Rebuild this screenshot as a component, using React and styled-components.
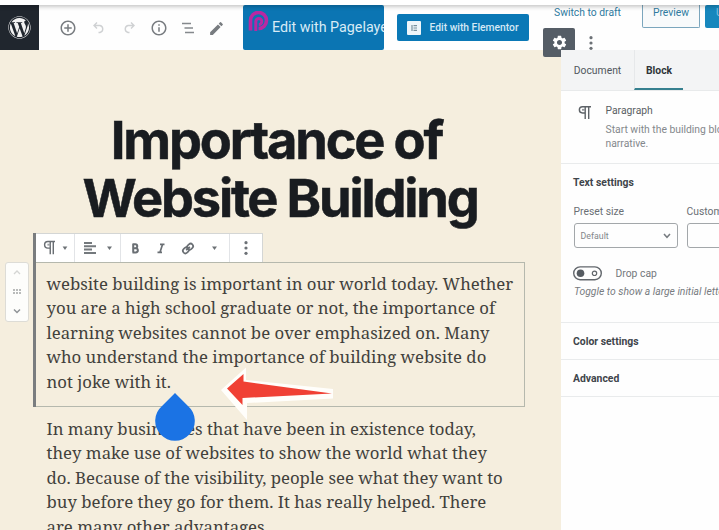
import React from "react";
import styled, { createGlobalStyle } from "styled-components";
import { FaWordpress } from "react-icons/fa";
import { MdAddCircleOutline, MdInfoOutline, MdEdit, MdSettings } from "react-icons/md";

const GlobalStyle = createGlobalStyle`
  * { box-sizing: border-box; }
  body { margin: 0; background: #fff; overflow: hidden; }
`;

const Page = styled.div`
  width: 719px;
  height: 530px;
  overflow: hidden;
  display: flex;
  flex-direction: column;
  background: #f5eede;
  font-family: Roboto, "Liberation Sans", sans-serif;
  font-size: 10.35px;
  color: #5b6167;
`;

const BrowserEdge = styled.div`
  height: 5px;
  flex: none;
  background: #fff;
  position: relative;
  z-index: 4;
  box-shadow: 0 1px 5px rgba(0, 0, 0, 0.3);
`;

const Header = styled.header`
  height: 45px;
  flex: none;
  display: flex;
  background: #fefefe;
  > * { flex: none; }
`;

const LogoBox = styled.div`
  width: 39px;
  display: flex;
  align-items: center;
  justify-content: center;
  background: #20262e;
  color: #f2f2f2;
  svg { display: block; }
`;

const Tools = styled.nav`
  width: 204px;
  padding: 1px 0 0 16px;
  display: flex;
  align-items: center;
`;

const ToolButton = styled.span`
  width: ${(p) => p.$w || 30}px;
  height: 24px;
  flex: none;
  display: flex;
  align-items: center;
  justify-content: center;
  color: ${(p) => (p.$muted ? "#cfd1d3" : "#787c80")};
  svg { display: block; }
`;

const PagelayerButton = styled.div`
  width: 141px;
  height: 45px;
  padding-left: 5px;
  display: flex;
  overflow: hidden;
  white-space: nowrap;
  border-radius: 2px;
  background: #0b75b3;
  color: #d8ebf6;
  font-size: 14.3px;
  line-height: 45px;
  gap: 3px;
  svg { flex: none; margin-top: 6px; }
`;

const ElementorButton = styled.div`
  width: 132px;
  height: 27px;
  margin: 9px 0 0 13px;
  padding-left: 10px;
  display: flex;
  align-items: center;
  gap: 8.5px;
  border-radius: 2px;
  background: #0a78b6;
  color: #d5e9f5;
  font-weight: 500;
  font-size: 10.3px;
`;

const HeaderEnd = styled.div`
  width: 176px;
  margin-left: 14px;
  display: flex;
  flex-direction: column;
`;

const Actions = styled.div`
  height: 24px;
  padding-left: 11px;
  display: flex;
  align-items: flex-start;
  color: #2f7ba0;
  > * { flex: none; }
`;

const DraftLink = styled.span`
  width: 88px;
  line-height: 15px;
`;

const PreviewButton = styled.span`
  width: 58px;
  height: 23px;
  border: 1px solid #7ba6bd;
  border-top: 0;
  border-radius: 0 0 2px 2px;
  background: #f8fafb;
  line-height: 15px;
  text-align: center;
`;

const UpdateButton = styled.span`
  width: 40px;
  height: 23px;
  margin-left: 5px;
  padding-left: 11px;
  border-radius: 2px;
  background: #1787bd;
  color: #86c4e2;
  line-height: 15px;
`;

const SettingsRow = styled.div`
  display: flex;
  align-items: flex-start;
  gap: 14px;
  svg { display: block; }
`;

const SettingsButton = styled.span`
  width: 32px;
  height: 29px;
  flex: none;
  position: relative;
  z-index: 1;
  display: flex;
  align-items: center;
  justify-content: center;
  background: #555d66;
  border-radius: 2px;
  color: #fff;
`;

const MoreButton = styled.span`
  padding-top: 7px;
`;

const Body = styled.div`
  flex: 1;
  min-height: 0;
  display: flex;
`;

const Canvas = styled.main`
  width: 561px;
  height: 480px;
  overflow: hidden;
`;

const Title = styled.h1`
  margin: 61px 0 0;
  font: 700 52.4px/58px Inter, sans-serif;
  letter-spacing: -2.2px;
  -webkit-text-stroke: 0.5px #191c20;
  text-align: center;
  color: #191c20;
`;

const TitleLine = styled.span`
  display: block;
  padding-right: ${(p) => p.$shift}px;
`;

const BlockArea = styled.div`
  margin-top: 6px;
  padding-left: 5px;
  display: flex;
  align-items: flex-start;
`;

const Mover = styled.div`
  width: 24px;
  height: 60px;
  margin: 29px 4px 0 0;
  flex: none;
  display: flex;
  align-items: center;
  justify-content: center;
  border: 1px solid #dddcd6;
  border-radius: 3px;
  background: #fdfdfb;
`;

const Block = styled.section`
  width: 492px;
  border-left: 3px solid #7a7d7f;
`;

const Toolbar = styled.div`
  width: 227px;
  height: 29px;
  display: flex;
  background: #fff;
  border: 1px solid #d4d6d5;
  border-width: 1px 1px 0 0;
`;

const Group = styled.div`
  width: ${(p) => p.$w}px;
  display: flex;
  align-items: center;
  justify-content: center;
  border-right: ${(p) => (p.$last ? "0" : "1px solid #e2e4e7")};
  svg { display: block; }
`;

const Paragraph = styled.p`
  margin: 0;
  font: 16.76px/24.45px "Noto Serif", "DejaVu Serif", serif;
  color: #42413c;
  white-space: nowrap;
`;

const Selected = styled.div`
  position: relative;
  height: 145px;
  padding: 9px 0 0 10.5px;
  border: 1px solid #b5b8ad;
  border-left: 0;
`;

const Following = styled.div`
  padding: 10px 0 0 46.5px;
`;

const Line = styled.span`
  display: block;
`;

const Arrow = styled.svg`
  position: absolute;
  left: 184px;
  top: 104px;
`;

const CaretHandle = styled.svg`
  position: absolute;
  left: 118px;
  top: 130px;
`;

const Sidebar = styled.aside`
  width: 158px;
  height: 480px;
  overflow: hidden;
  white-space: nowrap;
  position: relative;
  z-index: 2;
  background: #fefefe;
`;

const Tabs = styled.div`
  height: 41px;
  display: flex;
  background: #f3f4f5;
  border-bottom: 1px solid #e8eaeb;
`;

const Tab = styled.span`
  width: ${(p) => p.$w}px;
  line-height: 41px;
  text-align: center;
  color: ${(p) => (p.$active ? "#2f3439" : "#51575d")};
  font-weight: ${(p) => (p.$active ? 700 : 400)};
  border-bottom: ${(p) => (p.$active ? "2px solid #36808f" : "0")};
  border-left: ${(p) => (p.$active ? "1px solid #e6e8ea" : "0")};
`;

const BlockCard = styled.div`
  height: 73px;
  padding: 13px 0 0 17px;
  display: flex;
  gap: 14.5px;
  border-bottom: 1px solid #e9ebec;
  svg { flex: none; margin-top: 1px; }
`;

const CardText = styled.div`
  line-height: 14px;
  color: #84888c;
`;

const CardTitle = styled.div`
  margin-bottom: 5px;
  color: #5a5f64;
`;

const Panel = styled.div`
  height: ${(p) => p.$h}px;
  padding: 1px 0 0 12px;
  border-bottom: 1px solid #e9ebec;
`;

const PanelTitle = styled.h2`
  margin: 0;
  font-size: 10.4px;
  line-height: 36px;
  font-weight: 700;
  color: #3f454b;
`;

const Fields = styled.div`
  display: flex;
  gap: 8px;
  margin-top: 4px;
`;

const Field = styled.div`
  width: 105px;
  padding-left: 0.5px;
  flex: none;
  color: #6a6f74;
  line-height: 14px;
`;

const Control = styled.div`
  height: 25px;
  margin-top: 4px;
  padding: 0 6px;
  display: flex;
  align-items: center;
  justify-content: space-between;
  border: 1px solid #a3a7aa;
  border-radius: 3px;
  font-size: 8.8px;
  color: #83878b;
`;

const ToggleRow = styled.div`
  margin-top: 18px;
  display: flex;
  align-items: center;
  gap: 13.5px;
  color: #74787c;
`;

const Help = styled.div`
  margin: 4px 0 0 1px;
  line-height: 14px;
  font-style: italic;
  color: #777b7f;
`;

const PilcrowIcon = () => (
  <svg width="13" height="16" viewBox="0 0 13 16" fill="none" stroke="#5d6267" strokeWidth="1.4">
    <path d="M13 1.7H4.500a2.900 2.900 0 0 0 0 6.300h2.700M7.200 1.500v12.500M10.700 1.500v12.500" />
    <path d="M4 4.800h3" strokeWidth="1.800" stroke="#92969a" />
  </svg>
);

const UndoIcon = ({ flip }) => (
  <svg width="14" height="14" viewBox="0 0 14 14" fill="none" stroke="currentColor" strokeWidth="1.4">
    <path
      transform={flip ? "matrix(-1 0 0 1 14 0)" : undefined}
      d="M5 1.5L2 4.5l3 3M2.5 4.5H8a3.6 3.6 0 0 1 0 7H6.5"
    />
  </svg>
);

const OutlineIcon = () => (
  <svg width="14" height="12" viewBox="0 0 14 12" fill="none" stroke="#85898d" strokeWidth="1.6">
    <path d="M1 1.500h9M3.500 6h8.500M4 10.500h9" />
  </svg>
);

const PagelayerLogo = () => (
  <svg width="21" height="22" viewBox="0 0 21 22" fill="none" stroke="#b928a2">
    <path d="M2.500 19.500V9.500a8 8 0 1 1 8 8" strokeWidth="3.600" />
    <path d="M7.800 20v-9.500a3 3 0 1 1 3 3" strokeWidth="3" />
  </svg>
);

const ElementorLogo = () => (
  <svg width="14" height="14" viewBox="0 0 14 14">
    <rect width="14" height="14" rx="1" fill="#eef6fa" />
    <path d="M5 4v6M6.500 4.600H10M6.500 7H10M6.500 9.400H10" stroke="#77909c" strokeWidth="1.200" />
  </svg>
);

const DotsIcon = () => (
  <svg width="4" height="16" viewBox="0 0 4 16" fill="#6c7176">
    <circle cx="2" cy="2.700" r="1.600" />
    <circle cx="2" cy="8" r="1.600" />
    <circle cx="2" cy="13.300" r="1.600" />
  </svg>
);

const ParagraphTool = () => (
  <svg width="40" height="28" viewBox="0 0 40 28" fill="none" stroke="#696e73" strokeWidth="1.500">
    <path d="M20 7.200h-7.500a3.400 3.400 0 0 0 0 6.900h2.500M15 7v13.500M18.200 7v13.500" />
    <path d="M12 10.500h3" strokeWidth="2" stroke="#9da1a4" />
    <path d="M28 12.500h5l-2.500 3.500z" fill="#6d7276" stroke="none" />
  </svg>
);

const AlignTool = () => (
  <svg width="45" height="28" viewBox="0 0 45 28" fill="none" stroke="#74797d" strokeWidth="2">
    <path d="M9 9h8M9 12.300h12M9 15.600h8M9 18.900h12" />
    <path d="M32 12.500h5l-2.500 3.500z" fill="#6d7276" stroke="none" />
  </svg>
);

const FormatTool = () => (
  <svg width="108" height="28" viewBox="0 0 108 28" fill="none" stroke="#6a6f74" strokeWidth="2">
    <path d="M11.500 10.300h2.800a1.900 1.900 0 0 1 0 3.900h-2.300 2.700a2.100 2.100 0 0 1 0 4.300h-3.200M12.200 10v8.500" />
    <path d="M39 10.300h4.500M36.500 18.300H41M41.500 10.500l-2.500 7.700" strokeWidth="1.700" />
    <g strokeWidth="1.700" transform="rotate(-42 67 14.500)">
      <rect x="61" y="12" width="6.500" height="5" rx="2.500" />
      <rect x="66.500" y="12" width="6.500" height="5" rx="2.500" />
      <path d="M64.500 14.500h5" />
    </g>
    <path d="M91 12.500h5l-2.500 3.500z" fill="#6d7276" stroke="none" />
  </svg>
);

const MoverIcon = () => (
  <svg width="14" height="50" viewBox="0 0 14 50" fill="none">
    <path d="M4 7l3-3 3 3" stroke="#d4d5d3" strokeWidth="1.300" />
    <g fill="#b9bbba">
      {[3, 6, 9].map((x) =>
        [22, 25].map((y) => <rect key={`${x}-${y}`} x={x} y={y} width="2" height="2" />)
      )}
    </g>
    <path d="M4 42.500l3 3 3-3" stroke="#909497" strokeWidth="1.500" />
  </svg>
);

const SwitchIcon = () => (
  <svg width="29" height="15" viewBox="0 0 29 15" fill="none" stroke="#62676c">
    <rect x="0.700" y="0.900" width="27.600" height="12.800" rx="6.400" strokeWidth="1.400" />
    <circle cx="7.500" cy="7.300" r="3.800" fill="#565c62" stroke="none" />
    <circle cx="21.500" cy="7.300" r="2.200" strokeWidth="1.200" />
  </svg>
);

export default function App() {
  return (
    <Page>
      <GlobalStyle />
      <BrowserEdge />
      <Header>
        <LogoBox><FaWordpress size={23} /></LogoBox>
        <Tools>
          <ToolButton $w={25}><MdAddCircleOutline size={18} /></ToolButton>
          <ToolButton $w={37} $muted><UndoIcon /></ToolButton>
          <ToolButton $w={24} $muted><UndoIcon flip /></ToolButton>
          <ToolButton $w={35}><MdInfoOutline size={18} /></ToolButton>
          <ToolButton $w={23}><OutlineIcon /></ToolButton>
          <ToolButton $w={34}><MdEdit size={17} /></ToolButton>
        </Tools>
        <PagelayerButton><PagelayerLogo />Edit with Pagelayer</PagelayerButton>
        <ElementorButton><ElementorLogo />Edit with Elementor</ElementorButton>
        <HeaderEnd>
          <Actions>
            <DraftLink>Switch to draft</DraftLink>
            <PreviewButton>Preview</PreviewButton>
            <UpdateButton>Update</UpdateButton>
          </Actions>
          <SettingsRow>
            <SettingsButton><MdSettings size={17} /></SettingsButton>
            <MoreButton><DotsIcon /></MoreButton>
          </SettingsRow>
        </HeaderEnd>
      </Header>
      <Body>
        <Canvas>
          <Title>
            <TitleLine $shift={8}>Importance of</TitleLine>
            <TitleLine $shift={1}>Website Building</TitleLine>
          </Title>
          <BlockArea>
            <Mover><MoverIcon /></Mover>
            <Block>
              <Toolbar>
                <Group $w={39}><ParagraphTool /></Group>
                <Group $w={46}><AlignTool /></Group>
                <Group $w={109}><FormatTool /></Group>
                <Group $w={32} $last><DotsIcon /></Group>
              </Toolbar>
              <Selected>
                <Paragraph>
                  <Line>website building is important in our world today. Whether</Line>
                  <Line>you are a high school graduate or not, the importance of</Line>
                  <Line>learning websites cannot be over emphasized on. Many</Line>
                  <Line>who understand the importance of building website do</Line>
                  <Line>not joke with it.</Line>
                </Paragraph>
                <Arrow width="120" height="56" viewBox="220 367 120 56">
                  <path d="M221 390L246 367.500V380L333 389V398.500L247 403V420Z" fill="#fffefb" />
                  <path d="M227 388.500L243.500 374V381.500L332 393.500L242.500 398V405Z" fill="#f04034" />
                </Arrow>
                <CaretHandle width="42" height="50" viewBox="0 0 42 50">
                  <path d="M21 0L34 13A19.800 19.800 0 1 1 8 13Z" fill="#1b73e4" />
                </CaretHandle>
              </Selected>
            </Block>
          </BlockArea>
          <Following>
            <Paragraph>
              <Line>In many businesses that have been in existence today,</Line>
              <Line>they make use of websites to show the world what they</Line>
              <Line>do. Because of the visibility, people see what they want to</Line>
              <Line>buy before they go for them. It has really helped. There</Line>
              <Line>are many other advantages</Line>
            </Paragraph>
          </Following>
        </Canvas>
        <Sidebar>
          <Tabs>
            <Tab $w={73}>Document</Tab>
            <Tab $w={49} $active>Block</Tab>
          </Tabs>
          <BlockCard>
            <PilcrowIcon />
            <CardText>
              <CardTitle>Paragraph</CardTitle>
              Start with the building block of all<br />narrative.
            </CardText>
          </BlockCard>
          <Panel $h={159}>
            <PanelTitle>Text settings</PanelTitle>
            <Fields>
              <Field>
                Preset size
                <Control>
                  Default
                  <svg width="8" height="6" viewBox="0 0 8 6" fill="none" stroke="#777c80" strokeWidth="1.500">
                    <path d="M1 1l3 3.300L7 1" />
                  </svg>
                </Control>
              </Field>
              <Field>Custom<Control /></Field>
            </Fields>
            <ToggleRow><SwitchIcon />Drop cap</ToggleRow>
            <Help>Toggle to show a large initial letter.</Help>
          </Panel>
          <Panel $h={37}><PanelTitle>Color settings</PanelTitle></Panel>
          <Panel $h={37}><PanelTitle>Advanced</PanelTitle></Panel>
        </Sidebar>
      </Body>
    </Page>
  );
}
